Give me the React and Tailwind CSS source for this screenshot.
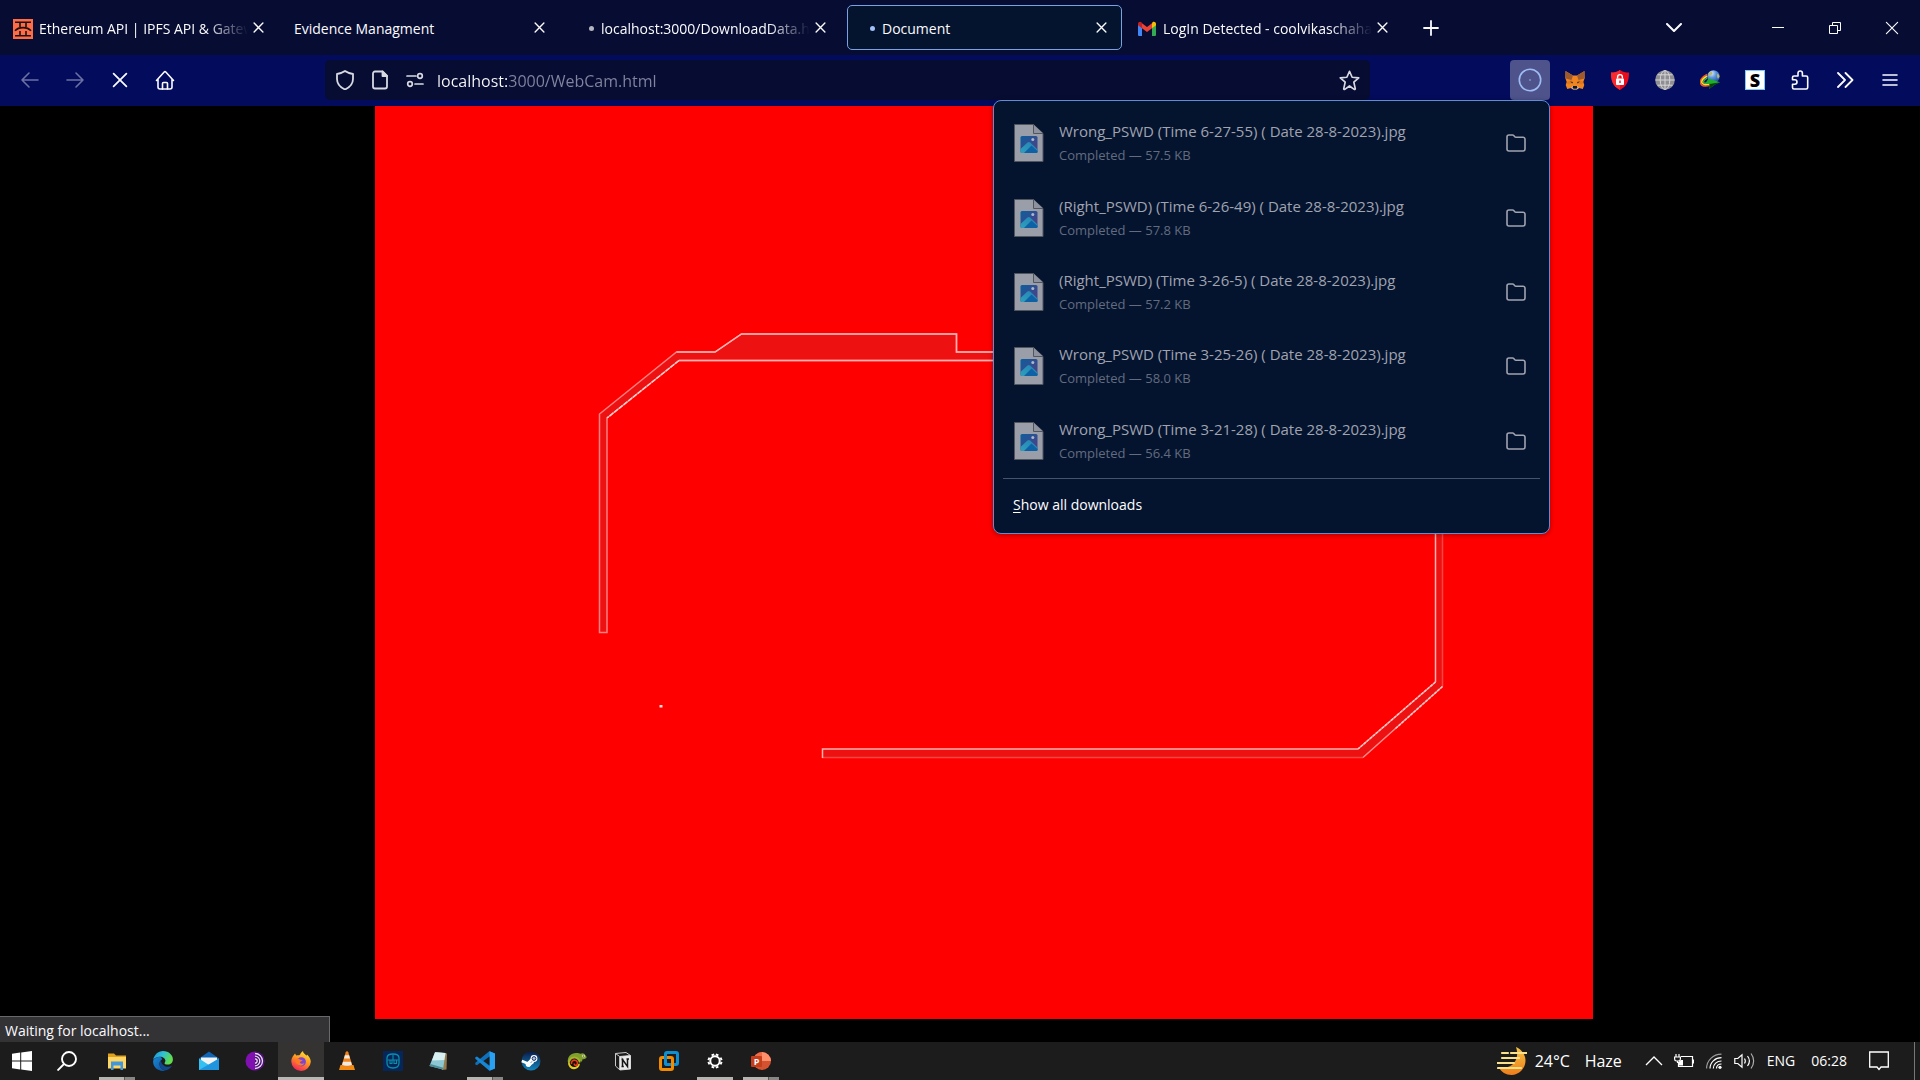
import React from "react";

const sans = "font-['Open_Sans','Noto_Sans',sans-serif]";

/* ---------- shared glyphs ---------- */

function Cross({ className = "size-3", width = 1.6 }) {
  return (
    <svg viewBox="0 0 12 12" className={className} fill="none" stroke="currentColor" strokeWidth={width} strokeLinecap="round" aria-hidden="true">
      <path d="M1.2 1.2 10.8 10.8M10.8 1.2 1.2 10.8" />
    </svg>
  );
}

function Line({ children, className = "size-5", width = 1.8, box = "0 0 20 20" }) {
  return (
    <svg viewBox={box} className={className} fill="none" stroke="currentColor" strokeWidth={width} strokeLinecap="round" strokeLinejoin="round" aria-hidden="true">
      {children}
    </svg>
  );
}

/* ---------- tab strip ---------- */

function ApiIcon() {
  return (
    <svg viewBox="0 0 20 20" className="size-5" aria-hidden="true">
      <rect width="20" height="20" fill="#ff6b47" />
      <path d="M2 3.200h16M2 16.800h16M7 3.500v4.500M13 3.500v4.500M7 12v5M13 12v5" stroke="#1c1210" strokeWidth="1.600" fill="none" />
      <path d="M2 11.800C4 9.400 6.800 8.600 10 8.600s6 .8 8 3.200" stroke="#1c1210" strokeWidth="1.600" fill="none" />
    </svg>
  );
}

function GmailIcon() {
  return (
    <svg viewBox="0 0 20 16" className="h-4 w-5" aria-hidden="true">
      <path d="M1 3v11a1 1 0 0 0 1 1h3V6.500z" fill="#4285f4" />
      <path d="M15 6.500V15h3a1 1 0 0 0 1-1V3z" fill="#34a853" />
      <path d="M15 2.200v5L19 4.200V3c0-1.900-2.100-2.900-3.500-1.800z" fill="#fbbc04" />
      <path d="M5 7.200v-5L10 6l5-3.800v5L10 11z" fill="#ea4335" />
      <path d="M1 3v1.200l4 3v-5l-.5-.9C3.100.1 1 1.100 1 3z" fill="#c5221f" />
    </svg>
  );
}

function LoadingDot({ tone }) {
  return (
    <span className="flex w-5 justify-end pr-px">
      <span className={`size-[5px] rounded-full ${tone}`} />
    </span>
  );
}

const tabs = [
  { title: "Ethereum API | IPFS API & Gateway", icon: <ApiIcon />, fade: true },
  { title: "Evidence Managment" },
  { title: "localhost:3000/DownloadData.html", icon: <LoadingDot tone="bg-[#b4b5c0]" />, fade: true },
  { title: "Document", icon: <LoadingDot tone="bg-[#a3c0f8]" />, active: true },
  { title: "LogIn Detected - coolvikaschahar", icon: <GmailIcon />, fade: true },
];

function Tab({ tab }) {
  return (
    <div
      className={`flex h-[45px] min-w-0 max-w-[275px] flex-1 items-center rounded-[5px] border pl-2 pr-[10px] ${
        tab.active ? "border-[#7aa2e3] bg-[#04142f]" : "border-transparent"
      }`}
    >
      <button role="tab" aria-selected={!!tab.active} className="flex min-w-0 flex-1 items-center gap-[6px] pt-[2px] text-left">
        {tab.icon}
        <span
          className={`min-w-0 flex-1 overflow-hidden text-sm whitespace-nowrap ${
            tab.fade ? "[mask-image:linear-gradient(to_left,transparent,black_42px)]" : ""
          }`}
        >
          {tab.title}
        </span>
      </button>
      <button aria-label={`Close ${tab.title}`} className="flex size-5 shrink-0 items-center justify-center">
        <Cross className="size-[11px]" width={1.5} />
      </button>
    </div>
  );
}

function TabStrip() {
  return (
    <div className="flex h-[55px] items-center bg-[#070c32] pl-1">
      <div role="tablist" className="flex min-w-0 flex-[1399] gap-[6px]">
        {tabs.map((t) => (
          <Tab key={t.title} tab={t} />
        ))}
      </div>
      <div className="flex min-w-0 flex-[516] items-center">
        <button aria-label="New tab" className="flex h-10 w-[54px] items-center justify-center">
          <Line className="size-4" box="0 0 16 16" width={1.8}>
            <path d="M8 1v14M1 8h14" />
          </Line>
        </button>
        <button aria-label="List all tabs" className="ml-auto flex size-10 items-center justify-center">
          <Line className="h-[9px] w-4" box="0 0 16 9" width={2}>
            <path d="m1 1 7 7 7-7" />
          </Line>
        </button>
        <div className="ml-[55px] flex">
          <button aria-label="Minimize" className="flex h-10 w-[57px] items-center justify-center">
            <svg viewBox="0 0 12 12" className="size-3" aria-hidden="true">
              <path d="M0 5.500h12" stroke="currentColor" />
            </svg>
          </button>
          <button aria-label="Restore" className="flex h-10 w-[57px] items-center justify-center">
            <svg viewBox="0 0 12 12" className="size-3" fill="none" stroke="currentColor" aria-hidden="true">
              <path d="M.5 3.500h8v8h-8zM3.500 3.500v-3h8v8h-3" />
            </svg>
          </button>
          <button aria-label="Close window" className="flex h-10 w-[57px] items-center justify-center">
            <Cross className="size-[14px]" width={1} />
          </button>
        </div>
      </div>
    </div>
  );
}

/* ---------- downloads panel ---------- */

const downloads = [
  { name: "Wrong_PSWD (Time 6-27-55) ( Date 28-8-2023).jpg", size: "57.5 KB" },
  { name: "(Right_PSWD) (Time 6-26-49) ( Date 28-8-2023).jpg", size: "57.8 KB" },
  { name: "(Right_PSWD) (Time 3-26-5) ( Date 28-8-2023).jpg", size: "57.2 KB" },
  { name: "Wrong_PSWD (Time 3-25-26) ( Date 28-8-2023).jpg", size: "58.0 KB" },
  { name: "Wrong_PSWD (Time 3-21-28) ( Date 28-8-2023).jpg", size: "56.4 KB" },
];

function ImageFile() {
  return (
    <svg viewBox="0 0 30 38" className="h-[38px] w-[30px] shrink-0" aria-hidden="true">
      <defs>
        <linearGradient id="photo" x1="0" y1="0" x2="1" y2="1">
          <stop offset="0" stopColor="#0d5e9d" />
          <stop offset="1" stopColor="#553c83" />
        </linearGradient>
        <linearGradient id="hill" x1="0" y1="1" x2="1" y2="0">
          <stop offset="0" stopColor="#2fa0bd" />
          <stop offset="1" stopColor="#2481b4" />
        </linearGradient>
      </defs>
      <path d="M.5.5h19l9.500 9v28H.5z" fill="#999ea9" stroke="#51555e" />
      <path d="M19.500.5v9H29" fill="#8d929e" stroke="#51555e" />
      <rect x="6.500" y="12" width="17" height="17" rx="1.500" fill="url(#photo)" />
      <path d="m6.500 25 7-6.500c.8-.7 1.800-.7 2.600 0l7.400 7v2a1.500 1.500 0 0 1-1.500 1.500H8a1.500 1.500 0 0 1-1.500-1.500z" fill="url(#hill)" />
      <path d="m10 29 7.500-7.500 6 5.500v.5a1.500 1.500 0 0 1-1.500 1.500z" fill="#0c62a5" />
      <circle cx="18.800" cy="15.500" r="1.500" fill="#aeb6c9" />
    </svg>
  );
}

function DownloadsPanel() {
  return (
    <section aria-label="Downloads" className="absolute top-10 right-0 z-20 w-[557px] rounded-lg border border-[#5e8cd8] bg-[#04142f] px-[9px] pt-[5px] text-white shadow-[0_1px_5px_rgba(0,0,0,0.35)]">
      <ul className="grid h-[372px] grid-rows-5">
        {downloads.map((d) => (
          <li key={d.name} className="flex items-center pr-[14px] pl-[11px] text-[#a0a3b0]">
            <ImageFile />
            <div className="ml-[15px] min-w-0 flex-1">
              <div className="truncate text-[15px] leading-6">{d.name}</div>
              <div className="text-[13px] leading-6 text-[#636b7f]">Completed — {d.size}</div>
            </div>
            <button aria-label="Show in folder">
              <svg viewBox="0 0 20 18" className="h-[18px] w-5" fill="none" stroke="currentColor" strokeWidth="1.600" strokeLinejoin="round" aria-hidden="true">
                <path d="M1 3a2 2 0 0 1 2-2h3.600a1.500 1.500 0 0 1 1.100.5l1.100 1.200a1.500 1.500 0 0 0 1.100.5H17a2 2 0 0 1 2 2V15a2 2 0 0 1-2 2H3a2 2 0 0 1-2-2z" />
              </svg>
            </button>
          </li>
        ))}
      </ul>
      <div className="border-t border-[#47536b]">
        <button className="flex h-[54px] w-full items-center pb-[3px] pl-[10px] text-sm">
          <span className="underline underline-offset-2">S</span>how all downloads
        </button>
      </div>
    </section>
  );
}

/* ---------- toolbar ---------- */

function Fox() {
  return (
    <svg viewBox="0 0 20 20" className="size-5" aria-hidden="true">
      <path d="M.5 1 8 5.500h4L19.500 1l.2 7-1.400 4 1 3-1.500 4-4-1-2 1.300H8.200L6.200 18l-4 1-1.500-4 1-3-1.400-4z" fill="#f08421" />
      <path d="M.5 1 8 5.500 6.500 10l-6-1.600zM19.500 1 12 5.500l1.500 4.500 6-1.600z" fill="#9c5a2e" />
      <path d="m1.500 12 5-2 1.500 3-5 1.500zM18.500 12l-5-2-1.500 3 5 1.500z" fill="#e2761b" />
      <path d="m5 11.500 3 .5-.6 1.500zM15 11.500l-3 .5.6 1.500z" fill="#233447" />
      <path d="M6 18l1.500-2h5l1.500 2-2 1.500H8z" fill="#d7c1b3" />
      <path d="M8 16h4l.4 2-1 .8H8.600L7.600 18z" fill="#161616" />
    </svg>
  );
}

function AdShield() {
  return (
    <svg viewBox="0 0 18 20" className="h-5 w-[18px]" aria-hidden="true">
      <path d="M9 0c2.500 1.800 5.500 2.600 9 2.600 0 8-1.500 13.500-9 17.400C1.500 16.100 0 10.600 0 2.600 3.500 2.600 6.500 1.800 9 0z" fill="#e90d1c" />
      <path d="M9 0v20C1.500 16.100 0 10.600 0 2.600 3.500 2.600 6.500 1.800 9 0z" fill="#fa2b2e" />
      <rect x="5" y="8.500" width="8" height="6.500" rx=".8" fill="#fff" />
      <path d="M6.600 8.500V7a2.400 2.400 0 0 1 4.800 0v1.500" fill="none" stroke="#fff" strokeWidth="1.400" />
      <path d="M9 10.500v2.500" stroke="#e90d1c" strokeWidth="1.300" />
    </svg>
  );
}

function GreyGlobe() {
  return (
    <svg viewBox="0 0 20 20" className="size-5" aria-hidden="true">
      <circle cx="10" cy="10" r="9.800" fill="#8f8f93" />
      <g fill="none" stroke="#d5d5d8" strokeWidth="1">
        <ellipse cx="10" cy="10" rx="4.800" ry="9.500" />
        <path d="M10 .5v19M.5 10h19M2.500 4.800h15M2.500 15.200h15" />
      </g>
    </svg>
  );
}

function DownloadGlobe() {
  return (
    <svg viewBox="0 0 20 20" className="size-5" aria-hidden="true">
      <defs>
        <radialGradient id="idm" cx=".35" cy=".25" r=".85">
          <stop offset="0" stopColor="#e3f0fb" />
          <stop offset=".4" stopColor="#5f97e0" />
          <stop offset="1" stopColor="#12419b" />
        </radialGradient>
      </defs>
      <circle cx="13.500" cy="6.500" r="6.300" fill="url(#idm)" />
      <path d="M10.500 1.500c1.500.3 2.300 1.300 2 2.300S10 5.500 8.500 6c.1-2 .8-3.500 2-4.500zM17.500 3.500c1.300.8 1.900 1.800 2 3.200l-1.500 2c-1-1-1.300-3.500-.5-5.200z" fill="#b9bb6a" />
      <path d="M7 4.500C2 7-.8 10.500.9 13.800c1.200 2.300 5 2.700 9.100 1.600" fill="none" stroke="#f0542a" strokeWidth="1.500" />
      <path d="M7 6.300c-4 2.200-6 4.700-4.800 6.900 1 1.700 3.900 1.700 7.300.7" fill="none" stroke="#ffe01f" strokeWidth="1.600" />
      <path d="M7 8.200c-2.600 1.600-4 3-3.300 4.200.7 1 3 .9 5.500 0" fill="none" stroke="#37b84a" strokeWidth="1.400" />
      <path d="m8.500 8.500 11.500 3.700-4.500 2L9 19l.8-5-4.500-.8z" fill="#1fb02a" />
      <path d="M9.800 14 20 12.200l-4.500 2L9 19z" fill="#0a3d10" />
    </svg>
  );
}

function ToolButton({ label, children, className = "" }) {
  return (
    <button aria-label={label} className={`flex size-10 shrink-0 items-center justify-center rounded ${className}`}>
      {children}
    </button>
  );
}

function Toolbar() {
  return (
    <div className="flex h-[51px] items-start bg-[#030b5c] pt-[5px] pr-[10px] pl-[10px]">
      <div className="flex flex-[315] gap-[5px]">
        <ToolButton label="Back" className="text-[#6d70a2]">
          <Line width={1.6}><path d="M18 10H2M9 3l-7 7 7 7" /></Line>
        </ToolButton>
        <ToolButton label="Forward" className="text-[#6d70a2]">
          <Line width={1.6}><path d="M2 10h16M11 3l7 7-7 7" /></Line>
        </ToolButton>
        <ToolButton label="Stop">
          <Cross className="size-4" width={1.3} />
        </ToolButton>
        <ToolButton label="Home">
          <Line width={1.6}>
            <path d="M1.500 10.500 9.200 2a1.100 1.100 0 0 1 1.600 0l7.700 8.500M3 9v8a2 2 0 0 0 2 2h10a2 2 0 0 0 2-2V9" />
            <path d="M7.500 19v-5.500a1 1 0 0 1 1-1h3a1 1 0 0 1 1 1V19" />
          </Line>
        </ToolButton>
      </div>

      <div className="flex h-10 min-w-0 flex-[1025] items-center rounded-[5px] bg-[#070c32] pr-[10px] pl-[10px] text-[#d8d9e2]">
        <button aria-label="Tracking protection" className="shrink-0">
          <Line>
            <path d="M10 1c2.200 1.500 5 2.600 8 3v5c0 4.700-3.500 8.400-8 10.500C5.500 17.400 2 13.700 2 9V4c3-.4 5.800-1.500 8-3z" />
          </Line>
        </button>
        <button aria-label="Page info" className="ml-[15px] shrink-0">
          <Line>
            <path d="M12.500 1.500H5a2 2 0 0 0-2 2v13a2 2 0 0 0 2 2h10a2 2 0 0 0 2-2V6z" />
            <path d="M12.500 1.500V6H17z" fill="currentColor" />
          </Line>
        </button>
        <button aria-label="Permissions" className="ml-[15px] shrink-0">
          <Line width={1.7}>
            <path d="M2 6h9M10 14h8" />
            <circle cx="15" cy="6" r="2.300" />
            <circle cx="5" cy="14" r="2.300" />
          </Line>
        </button>
        <input
          aria-label="Address"
          defaultValue="localhost:3000/WebCam.html"
          className="ml-3 h-10 min-w-0 flex-1 bg-[linear-gradient(90deg,#fbfbfe_70px,#82859f_70px)] bg-clip-text pt-[2px] text-base text-transparent outline-none"
        />
        <button aria-label="Bookmark" className="shrink-0">
          <Line className="size-[21px]" width={1.6}>
            <path d="m10 1.200 2.500 5.700 6.300.6-4.700 4.100 1.400 6.100c.1.700-.5 1-1 .7L10 15.200l-4.500 3.200c-.5.300-1.100 0-1-.7l1.400-6.100L1.200 7.500l6.300-.6z" />
          </Line>
        </button>
      </div>

      <div className="flex flex-[540] justify-end gap-[5px]">
        <div className="relative">
          <ToolButton label="Downloads" className="bg-[#4e538c] text-[#9fbcf5]">
            <svg viewBox="0 0 24 24" className="size-6" fill="none" stroke="currentColor" aria-hidden="true">
              <circle cx="12" cy="12" r="10.700" strokeWidth="1.600" />
              <circle cx="12" cy="12" r=".8" fill="currentColor" stroke="none" />
            </svg>
          </ToolButton>
          <DownloadsPanel />
        </div>
        <ToolButton label="Wallet"><Fox /></ToolButton>
        <ToolButton label="Ad blocker"><AdShield /></ToolButton>
        <ToolButton label="Proxy"><GreyGlobe /></ToolButton>
        <ToolButton label="Download manager"><DownloadGlobe /></ToolButton>
        <ToolButton label="S extension">
          <span className="flex size-5 items-center justify-center border border-[#7ec8f5] bg-white text-lg leading-none font-extrabold text-black">S</span>
        </ToolButton>
        <ToolButton label="Extensions">
          <Line width={1.6}>
            <path d="M2.500 9V7.500A1.500 1.500 0 0 1 4 6h4V3.200a2.200 2.200 0 0 1 4.400 0V6h3.800a1.500 1.500 0 0 1 1.500 1.500v10a1.500 1.500 0 0 1-1.500 1.500H4a1.500 1.500 0 0 1-1.500-1.500v-3.300h2.300a2.200 2.200 0 0 0 0-4.400H2.500z" />
          </Line>
        </ToolButton>
        <ToolButton label="More tools">
          <Line className="h-4 w-[18px]" box="0 0 18 16" width={1.8}>
            <path d="m2 1 7 7-7 7M9.500 1l7 7-7 7" />
          </Line>
        </ToolButton>
        <ToolButton label="Menu">
          <Line className="h-[14px] w-4" box="0 0 16 14" width={1.6}>
            <path d="M1 2h14M1 7h14M1 12h14" />
          </Line>
        </ToolButton>
      </div>
    </div>
  );
}

/* ---------- page ---------- */

function CameraFrame() {
  return (
    <svg viewBox="0 0 1218 913" className="block aspect-[1218/913] w-full bg-[#ff0000]" role="img" aria-label="Camera frame">
      <path
        d="M224.500 526.500V308L301.500 246H340L366.500 228H581.500V246H1000V254.500H304L232 312V526.500z"
        fill="#ee1111"
        stroke="#ff8080"
        strokeWidth="1.500"
      />
      <path d="M304 254.500H1000M301.500 246H340L366.500 228H581.500V246H1000" fill="none" stroke="#ffb4b4" strokeWidth="1.500" />
      <path d="M304 254.500 232 312" fill="none" stroke="#ffd0d0" strokeWidth="1.500" strokeDasharray="5 1" />
      <path d="M1060.500 400V576L983 643H447V651.500H988L1067.500 580.500V400z" fill="#ee1111" />
      <path d="M1067.500 400V580.500M988 651.500H447" fill="none" stroke="#f54545" strokeWidth="1.500" />
      <path d="M1060.500 400V576M983 643H447.500V652" fill="none" stroke="#ffb0b0" strokeWidth="1.500" />
      <path d="M1060.500 576 983 643M1067.500 580.500 988 651.500" fill="none" stroke="#ff8c8c" strokeWidth="1.500" />
      <path d="M1060.500 576 983 643M1067.500 580.500 1020 623" fill="none" stroke="#ffc8c8" strokeWidth="1.500" strokeDasharray="3 1" />
      <rect x="284.500" y="599" width="3" height="2.500" fill="#ffdcdc" />
    </svg>
  );
}

/* ---------- taskbar ---------- */

function App20({ children }) {
  return <svg viewBox="0 0 20 20" className="size-5" aria-hidden="true">{children}</svg>;
}

const apps = [
  {
    name: "File Explorer", mark: "split",
    icon: (
      <App20>
        <path d="M1 2.500h6l2 2h10v4H1z" fill="#e0a21c" />
        <path d="M1 6h18v11.500H1z" fill="#ffd663" />
        <path d="M4 10.500h12V19h-2.500v-4.500h-7V19H4z" fill="#3f97dd" />
      </App20>
    ),
  },
  {
    name: "Edge",
    icon: (
      <App20>
        <defs>
          <linearGradient id="edgeA" x1="0" y1="0" x2="1" y2=".4">
            <stop offset="0" stopColor="#1d8fd8" /><stop offset=".5" stopColor="#2fc0d3" /><stop offset="1" stopColor="#62dd4a" />
          </linearGradient>
          <linearGradient id="edgeB" x1="0" y1="0" x2="1" y2="1">
            <stop offset="0" stopColor="#1a88d6" /><stop offset="1" stopColor="#0d4f9b" />
          </linearGradient>
        </defs>
        <path d="M.2 9C1 4 5 .1 10 .1c6 0 9.900 4.200 9.900 8.400 0 3-2.300 5-5 5-2 0-3.700-.7-3.300-1.600.5-.7.800-1.300.8-2.100C12.400 7.500 10 5.700 7 5.700S1 7 .2 9z" fill="url(#edgeA)" />
        <path d="M7 5.800C3.500 5.800.6 8 .1 10.200c-.2 5.500 4 9.700 9.900 9.700 1 0 2-.2 3-.5-4-.3-6.500-3.300-6.500-6.500 0-2 1-3.600 2.500-4.500 0-.9-.7-2.300-2-2.600z" fill="url(#edgeB)" />
        <path d="M7.800 9.500c-.9 1-1.300 2.300-1.300 3.500 0 4 4 7 7.500 6 2.200-.8 4-2.400 5-4.200-3.500 1.800-10 1.500-11.200-5.300z" fill="#114a8b" />
      </App20>
    ),
  },
  {
    name: "Mail",
    icon: (
      <App20>
        <path d="M0 7.500 10 .5l10 7V12H0z" fill="#0f64b5" />
        <path d="M2 6.500h16V14H2z" fill="#f3f3f3" />
        <path d="M0 7.500 10 14l10-6.500V19H0z" fill="#35c0f2" />
        <path d="M0 19 20 7.500V19z" fill="#1f95e0" />
      </App20>
    ),
  },
  {
    name: "Tor Browser",
    icon: (
      <App20>
        <circle cx="10" cy="10" r="9.500" fill="#8010b0" />
        <path d="M10 .5a9.500 9.500 0 0 1 0 19z" fill="#4b1173" />
        <g fill="none" stroke="#eadcf4" strokeWidth="1.300">
          <path d="M10 2.500a7.500 7.500 0 0 1 0 15M10 5.200a4.800 4.800 0 0 1 0 9.600M10 7.800a2.200 2.200 0 0 1 0 4.400" />
        </g>
      </App20>
    ),
  },
  {
    name: "Firefox", mark: "active",
    icon: (
      <App20>
        <defs>
          <linearGradient id="fx" x1=".8" y1="0" x2=".3" y2="1">
            <stop offset="0" stopColor="#ffe83a" /><stop offset=".45" stopColor="#ff9a1f" /><stop offset="1" stopColor="#f6205b" />
          </linearGradient>
        </defs>
        <path d="M2.500 4.500 4 2.500l1.200 2c.8-.3 2-.4 3-.2 1-.3 1.500-2.600 3.800-4.200 0 2.400 2 3 3.500 4.700l.5-1.400c2 1.600 3.800 4.400 3.800 7.400A9.700 9.700 0 0 1 10 20 9.700 9.700 0 0 1 .3 10.500c0-2.300.9-4.400 2.200-6z" fill="url(#fx)" />
        <circle cx="10.300" cy="10.800" r="4.600" fill="#7a45d8" />
        <path d="M3.800 8.300c2-1.400 4-.8 5.400.5l2.300.1c-.3 1.300-2.300 1.300-2.700 2.500 1 1.700 3.200 1.600 4.700.7-1 2.800-5 3.500-7.300 1.200C4.800 12 4.300 10 3.800 8.300z" fill="#ff7a22" />
      </App20>
    ),
  },
  {
    name: "VLC",
    icon: (
      <App20>
        <path d="m3.500 14-1.500 5h16l-1.500-5z" fill="#f08a12" />
        <path d="M8.700 1.200a1.400 1.400 0 0 1 2.600 0L15.500 15c-1 1.700-10 1.700-11 0z" fill="#f58216" />
        <path d="m7.900 4.200 4.200 0 .9 3.200H7zM6 10.800h8l.9 2.900c-2 1.300-7.800 1.300-9.800 0z" fill="#eceae6" />
      </App20>
    ),
  },
  {
    name: "Security tool",
    icon: (
      <App20>
        <rect width="20" height="20" fill="#04265a" />
        <path d="M4 7c0-3 2-4 6-4s6 1 6 4v5c0 3-2 5-6 5s-6-2-6-5z" fill="none" stroke="#0d8da8" strokeWidth="1.300" />
        <path d="M4.500 9h11M10 3.500V9M7 9v3.500h2V9M11 9v3.500h2.500V9" fill="none" stroke="#0d8da8" strokeWidth="1.100" />
      </App20>
    ),
  },
  {
    name: "Notepad",
    icon: (
      <App20>
        <path d="M6.500 1 18 2.500l-.5 16L13 19z" fill="#967b4c" />
        <path d="M6 1.200 16.500 2 14 18.500.5 15z" fill="#8dc8d2" />
        <path d="M6 1.200 16.500 2 15.300 9 3 9.500z" fill="#d9f0f2" />
        <path d="m.5 15 13.500 3.500.3-1.800L1.500 13z" fill="#4b8d99" />
      </App20>
    ),
  },
  {
    name: "Visual Studio Code", mark: "split",
    icon: (
      <App20>
        <path d="M14.500.2 20 2.600v14.800l-5.500 2.400L5.500 11.500 2 14.300.3 13.500v-1.700L14.500 0z" fill="#0f6fb8" />
        <path d="M14.500 19.800.3 7.800V6.200L2 5.600l12.500 9.600z" fill="#1787d4" />
        <path d="M14.500.2 20 2.600v14.800l-5.500 2.400z" fill="#29a0f0" />
        <path d="M14.500 5.500v9L8.500 10z" fill="#1c1c1c" />
      </App20>
    ),
  },
  {
    name: "Steam",
    icon: (
      <App20>
        <defs>
          <linearGradient id="steam" x1="0" y1="0" x2="0" y2="1">
            <stop offset="0" stopColor="#0a1b48" /><stop offset="1" stopColor="#1387c0" />
          </linearGradient>
        </defs>
        <circle cx="10" cy="10" r="9.500" fill="url(#steam)" />
        <path d="m.8 10 6 2.500 4-4" fill="none" stroke="#fff" strokeWidth="2.600" />
        <circle cx="7.300" cy="13.300" r="2.600" fill="#fff" />
        <path d="m7.500 15 5-4" stroke="#fff" strokeWidth="2.200" />
        <circle cx="13" cy="7.500" r="3.400" fill="#fff" />
        <circle cx="13" cy="7.500" r="1.900" fill="#b8c3d4" stroke="#173568" />
      </App20>
    ),
  },
  {
    name: "Chameleon",
    icon: (
      <App20>
        <path d="M.8 11C.5 5.500 4 1.800 9.500 2c1.800 0 3 .4 4 .8 1.500-1 3-.8 4 .2L19.700 6c-.4 1.700-2.200 2.300-4.200 2.300L15 10.500h-1.800L12.500 9z" fill="#80a02d" />
        <path d="M7 6.200a6 6 0 1 0 6 6.600h-2.500c-.3 1.500-1.500 3-3.500 3z" fill="#e0cf20" />
        <path d="M2 12.500C2 9 4 6.500 7.200 6.500c3.300 0 5.300 2.400 5.300 5" fill="none" stroke="#a5b32a" strokeWidth="2" />
        <circle cx="7.200" cy="11.800" r="4.300" fill="#190d08" />
        <path d="M4.600 13a3 3 0 1 1 5.200 1c-1.500 1-3 0-2.300-1.500" fill="none" stroke="#e6391f" strokeWidth="1.600" />
        <circle cx="16.500" cy="5" r="1.300" fill="#e8ecd0" />
        <circle cx="16.500" cy="5" r=".6" fill="#111" />
      </App20>
    ),
  },
  {
    name: "Notion",
    icon: (
      <App20>
        <path d="M2.500 2.500 13 1.500l4.500 3V18L7 19l-4.500-4z" fill="#1b1b1b" stroke="#c9c9c9" strokeLinejoin="round" />
        <path d="m2.500 2.500 4.200 3 10.800-1M6.700 5.500V19" fill="none" stroke="#c9c9c9" />
        <path d="m6.700 5.500 10.800-1V18l-10.800 1z" fill="#e9e9e9" />
        <path d="M9.500 15.500v-7l5 7v-7M8.500 8.500h2M13.500 8h2.500M8.500 15.500h2.300" stroke="#151515" strokeWidth="1.500" fill="none" />
      </App20>
    ),
  },
  {
    name: "VMware",
    icon: (
      <App20>
        <rect x="6.500" y="1.500" width="12" height="12" rx="1.500" fill="none" stroke="#0f8fd0" strokeWidth="3" />
        <rect x="1.500" y="6.500" width="12" height="12" rx="1.500" fill="none" stroke="#f38b00" strokeWidth="3" />
        <path d="M6.500 5v7a1.500 1.500 0 0 0 1.500 1.500h4" fill="none" stroke="#0f8fd0" strokeWidth="3" />
      </App20>
    ),
  },
  {
    name: "Settings", mark: "full",
    icon: (
      <App20>
        <circle cx="10" cy="10" r="4.700" fill="none" stroke="#fff" strokeWidth="2" />
        <g stroke="#fff" strokeWidth="2.800">
          <path d="M8.300 4.800 7.500 3M11.700 4.800l.8-1.800M15.200 8.300l1.800-.8M15.200 11.700l1.800.8M11.700 15.200l.8 1.800M8.300 15.200l-.8 1.800M4.800 11.700 3 12.500M4.800 8.300 3 7.500" />
        </g>
      </App20>
    ),
  },
  {
    name: "PowerPoint", mark: "split",
    icon: (
      <App20>
        <circle cx="11" cy="10" r="9" fill="#d35230" />
        <path d="M11 1a9 9 0 0 1 9 9h-9z" fill="#ff8f6b" />
        <path d="M2 10a9 9 0 0 1 9-9v9z" fill="#ed6c47" />
        <rect y="5" width="11" height="11" rx="1" fill="#c43e1c" />
        <text x="5.500" y="14" textAnchor="middle" fontSize="9" fontWeight="700" fill="#fff" fontFamily="Open Sans">P</text>
      </App20>
    ),
  },
];

function TaskMark({ kind }) {
  if (!kind) return null;
  if (kind === "active") return <span className="absolute inset-x-0 bottom-0 h-[3px] bg-[#b9b7b3]" />;
  return (
    <span className="absolute inset-x-[5px] bottom-0 flex h-[3px]">
      <span className="flex-1 bg-[#b5b4ae]" />
      {kind === "split" && <span className="w-[11px] border-l border-[#555] bg-[#868682]" />}
    </span>
  );
}

function Taskbar() {
  return (
    <footer className="flex h-[38px] shrink-0 items-stretch bg-[#1c1c1c] text-white">
      <button aria-label="Start" className="flex w-11 items-center justify-center">
        <svg viewBox="0 0 20 20" className="size-5" fill="#fff" aria-hidden="true">
          <path d="M0 2.800 8.200 1.600v7.900H0zM9.200 1.500 20 0v9.500H9.200zM0 10.500h8.200v7.900L0 17.200zM9.200 10.500H20V20L9.200 18.500z" />
        </svg>
      </button>
      <button aria-label="Search" className="mr-1 flex w-[46px] items-center justify-center">
        <svg viewBox="0 0 20 20" className="size-5" fill="none" stroke="#fff" strokeWidth="1.900" aria-hidden="true">
          <circle cx="12" cy="8" r="7" />
          <path d="m7 13-6.500 6.500" />
        </svg>
      </button>
      {apps.map((a) => (
        <button
          key={a.name}
          aria-label={a.name}
          className={`relative flex w-[46px] items-center justify-center ${a.mark === "active" ? "bg-[#343332]" : ""}`}
        >
          {a.icon}
          <TaskMark kind={a.mark} />
        </button>
      ))}

      <div className="ml-auto flex items-center">
        <button className="flex items-center text-base">
          <svg viewBox="0 0 30 28" className="mr-2 h-7 w-[30px]" aria-hidden="true">
            <defs>
              <linearGradient id="haze" x1="0" y1="0" x2="0" y2="1">
                <stop offset="0" stopColor="#f6c445" /><stop offset="1" stopColor="#ef7d1a" />
              </linearGradient>
            </defs>
            <path d="M19 0c5.500 2.500 9.500 7.500 9.500 13.500C28.500 21.500 22 28 14.500 28 9 28 4 25 2 20.500c7 1 12-1 15-4.500 3.500-4.500 4-10 2-16z" fill="url(#haze)" />
            <path d="M5 6h6M14 6h16M5 11h17M0 16h17M1 21h23" stroke="#fbe08a" strokeWidth="2.200" strokeLinecap="round" />
          </svg>
          <span className="w-[50px] text-left">24°C</span>
          <span>Haze</span>
        </button>
        <button aria-label="Show hidden icons" className="ml-[23px]">
          <svg viewBox="0 0 18 10" className="h-[10px] w-[18px]" fill="none" stroke="#fff" strokeWidth="1.300" aria-hidden="true">
            <path d="m1 9 8-8 8 8" />
          </svg>
        </button>
        <button aria-label="Battery" className="ml-[11px]">
          <svg viewBox="0 0 20 14" className="h-[14px] w-5" fill="none" stroke="#fff" strokeWidth="1.200" aria-hidden="true">
            <path d="M7 2.500h11.500v10H4.500V8M19.500 5.500v4M2 0v3M5 0v3M.6 3h5.800v2A2 2 0 0 1 4.500 7h-2A2 2 0 0 1 .6 5zM3.500 7v2" />
            <path d="M5 7.500 7 6h2v5.500H5z" fill="#fff" stroke="none" />
          </svg>
        </button>
        <button aria-label="Network" className="ml-3">
          <svg viewBox="0 0 16 16" className="size-4" fill="none" stroke="#fff" strokeWidth="1.200" aria-hidden="true">
            <path d="M.6 15.500C.6 7.500 7 1.200 15.500 1.200" stroke="#9a9a9a" />
            <path d="M4 15.500C4 9.500 9 4.700 15.500 4.700M7.300 15.500c0-4.200 3.500-7.500 8.200-7.500M10.500 15.500c0-2.500 2-4.500 5-4.500" />
            <circle cx="14" cy="14.300" r="1.600" fill="#fff" stroke="none" />
          </svg>
        </button>
        <button aria-label="Volume" className="ml-3">
          <svg viewBox="0 0 21 18" className="h-[18px] w-[21px]" fill="none" stroke="#fff" strokeWidth="1.200" aria-hidden="true">
            <path d="M.8 6.500h3L8 2.800v12.400L3.800 11.500h-3z" />
            <path d="M10.500 6.500c1 1.500 1 3.500 0 5M13.500 4c2.300 3 2.300 7 0 10" />
            <path d="M17 1.500c3.500 4.500 3.500 10.500 0 15" stroke="#b0b0b0" />
          </svg>
        </button>
        <button className="ml-[12px] text-sm">ENG</button>
        <button className="ml-4 text-sm">06:28</button>
        <button aria-label="Notifications" className="ml-[22px]">
          <svg viewBox="0 0 20 20" className="size-5" fill="none" stroke="#fff" strokeWidth="1.300" aria-hidden="true">
            <path d="M.7 1h18.600v15H12l-2 2.500L8 16H.7z" />
          </svg>
        </button>
        <span className="ml-[25px] mr-[5px] h-[38px] w-px bg-[#777]" />
      </div>
    </footer>
  );
}

export default function App() {
  return (
    <div className={`flex h-screen flex-col overflow-hidden bg-black text-[#fbfbfe] ${sans}`}>
      <header className="relative z-10 shrink-0">
        <TabStrip />
        <Toolbar />
      </header>
      <main className="relative min-h-0 flex-1 bg-black">
        <div className="grid grid-cols-[375fr_1218fr_327fr]">
          <div className="col-start-2">
            <CameraFrame />
          </div>
        </div>
        <div role="status" className="absolute bottom-0 left-0 flex h-[26px] w-[330px] items-center border-t border-r border-[#69696c] bg-[#333336] pt-[2px] pl-[5px] text-sm">
          Waiting for localhost...
        </div>
      </main>
      <Taskbar />
    </div>
  );
}
